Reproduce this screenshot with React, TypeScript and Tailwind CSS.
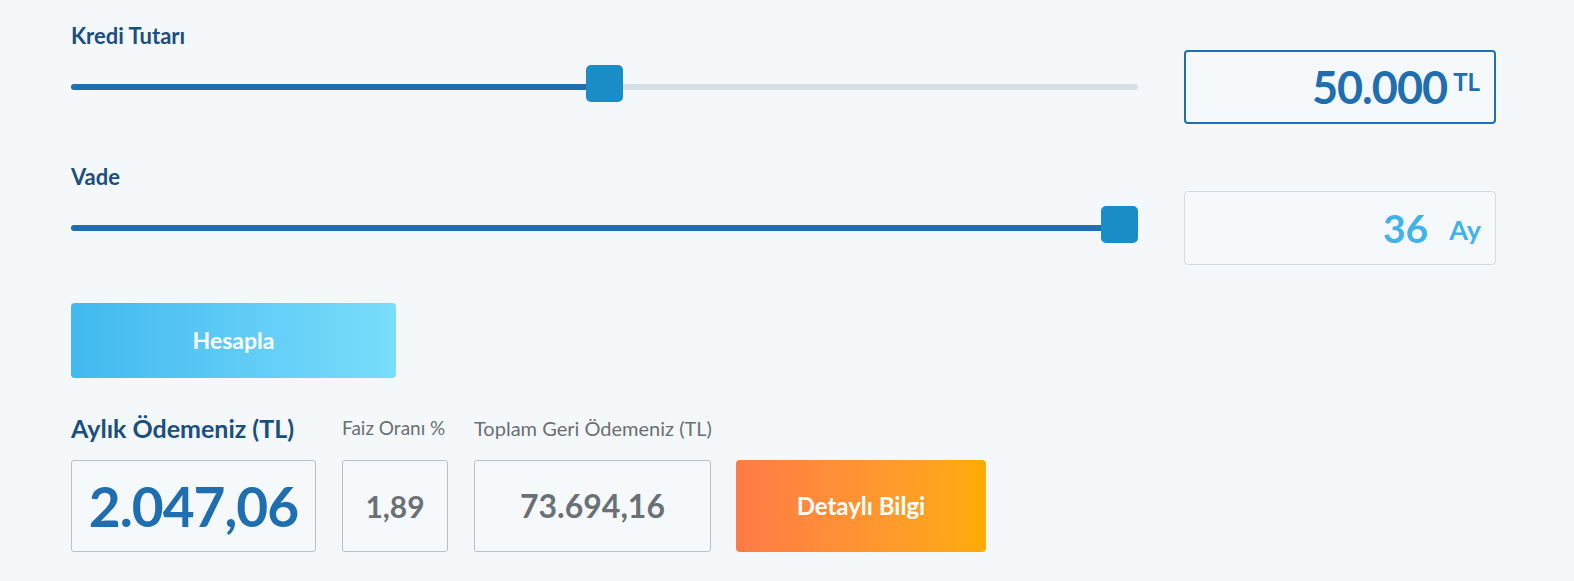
import React from "react";

function Slider({ pct }: { pct: number }) {
  return (
    <div className="relative h-[37px] flex-1">
      <div className="absolute left-0 right-0 top-[19px] h-[6px] rounded-full bg-[#d6dee6]" />
      <div
        className="absolute left-0 top-[19px] h-[6px] rounded-l-full bg-[#1f6fb0]"
        style={{ width: `${pct}%` }}
      />
      <div
        className="absolute top-0 h-[37px] w-[37px] rounded-[5px] bg-[#1b8dc6]"
        style={{ left: `calc(${pct}% - ${(37 * pct) / 100}px)` }}
      />
    </div>
  );
}

export default function App() {
  return (
    <div
      className="min-h-[581px] w-full bg-[#f4f8fb] pl-[71px] pr-[78px] pt-[23px]"
      style={{ fontFamily: "Lato, 'Liberation Sans', sans-serif" }}
    >
      {/* Kredi Tutarı */}
      <div className="text-[22px] font-bold leading-[26px] text-[#1a4f80]">Kredi Tutarı</div>
      <div className="mt-[1px] flex items-start gap-[46px]">
        <div className="flex-1 pt-[15px]">
          <Slider pct={50} />
        </div>
        <div className="flex h-[74px] w-[312px] items-center justify-end rounded-[4px] border-2 border-[#2170ad] bg-[#f6f9fc] pr-[14px]">
          <span className="text-[45px] font-bold leading-none tracking-[-1px] text-[#1f6fb0]">50.000</span>
          <span className="ml-[6px] mb-[10px] text-[24px] font-bold leading-none text-[#1f6fb0]">TL</span>
        </div>
      </div>

      {/* Vade */}
      <div className="mt-[40px] text-[22px] font-bold leading-[26px] text-[#1a4f80]">Vade</div>
      <div className="mt-[1px] flex items-start gap-[46px]">
        <div className="flex-1 pt-[15px]">
          <Slider pct={100} />
        </div>
        <div className="flex h-[74px] w-[312px] items-center justify-end rounded-[4px] border border-[#d3dbe1] bg-[#f6f9fc] pr-[14px]">
          <span className="text-[39px] font-bold leading-none text-[#42b3ea]">36</span>
          <span className="ml-[21px] mt-[2px] text-[27px] font-bold leading-none text-[#42b3ea]">Ay</span>
        </div>
      </div>

      {/* Hesapla */}
      <button className="mt-[38px] flex h-[75px] w-[325px] items-center justify-center rounded-[4px] bg-gradient-to-r from-[#40b8f0] to-[#79ddfb] text-[23px] font-bold text-white">
        Hesapla
      </button>

      {/* Results */}
      <div className="mt-[35px] flex items-end gap-[26px]">
        <div className="flex flex-col">
          <div className="whitespace-nowrap text-[25px] font-bold leading-[30px] text-[#1a4f80]">Aylık Ödemeniz (TL)</div>
          <div className="mt-[17px] flex h-[92px] w-[245px] items-center justify-center rounded-[3px] border border-[#b9c0c6] bg-[#f6f9fc]">
            <span className="text-[55px] font-bold leading-none tracking-[-1px] text-[#1f6fb0]">2.047,06</span>
          </div>
        </div>
        <div className="flex flex-col">
          <div className="whitespace-nowrap text-[19px] leading-[30px] text-[#6b6f73]">Faiz Oranı %</div>
          <div className="mt-[17px] flex h-[92px] w-[106px] items-center justify-center rounded-[3px] border border-[#b9c0c6] bg-[#f6f9fc]">
            <span className="text-[30px] font-bold leading-none text-[#6a7075]">1,89</span>
          </div>
        </div>
        <div className="flex flex-col">
          <div className="whitespace-nowrap text-[20px] leading-[30px] text-[#6b6f73]">Toplam Geri Ödemeniz (TL)</div>
          <div className="mt-[17px] flex h-[92px] w-[237px] items-center justify-center rounded-[3px] border border-[#b9c0c6] bg-[#f6f9fc]">
            <span className="text-[32px] font-bold leading-none text-[#6a7075]">73.694,16</span>
          </div>
        </div>
        <button className="-ml-[2px] flex h-[92px] w-[250px] items-center justify-center rounded-[4px] bg-gradient-to-r from-[#ff7a45] to-[#ffac00] text-[24px] font-bold text-white">
          Detaylı Bilgi
        </button>
      </div>
    </div>
  );
}
